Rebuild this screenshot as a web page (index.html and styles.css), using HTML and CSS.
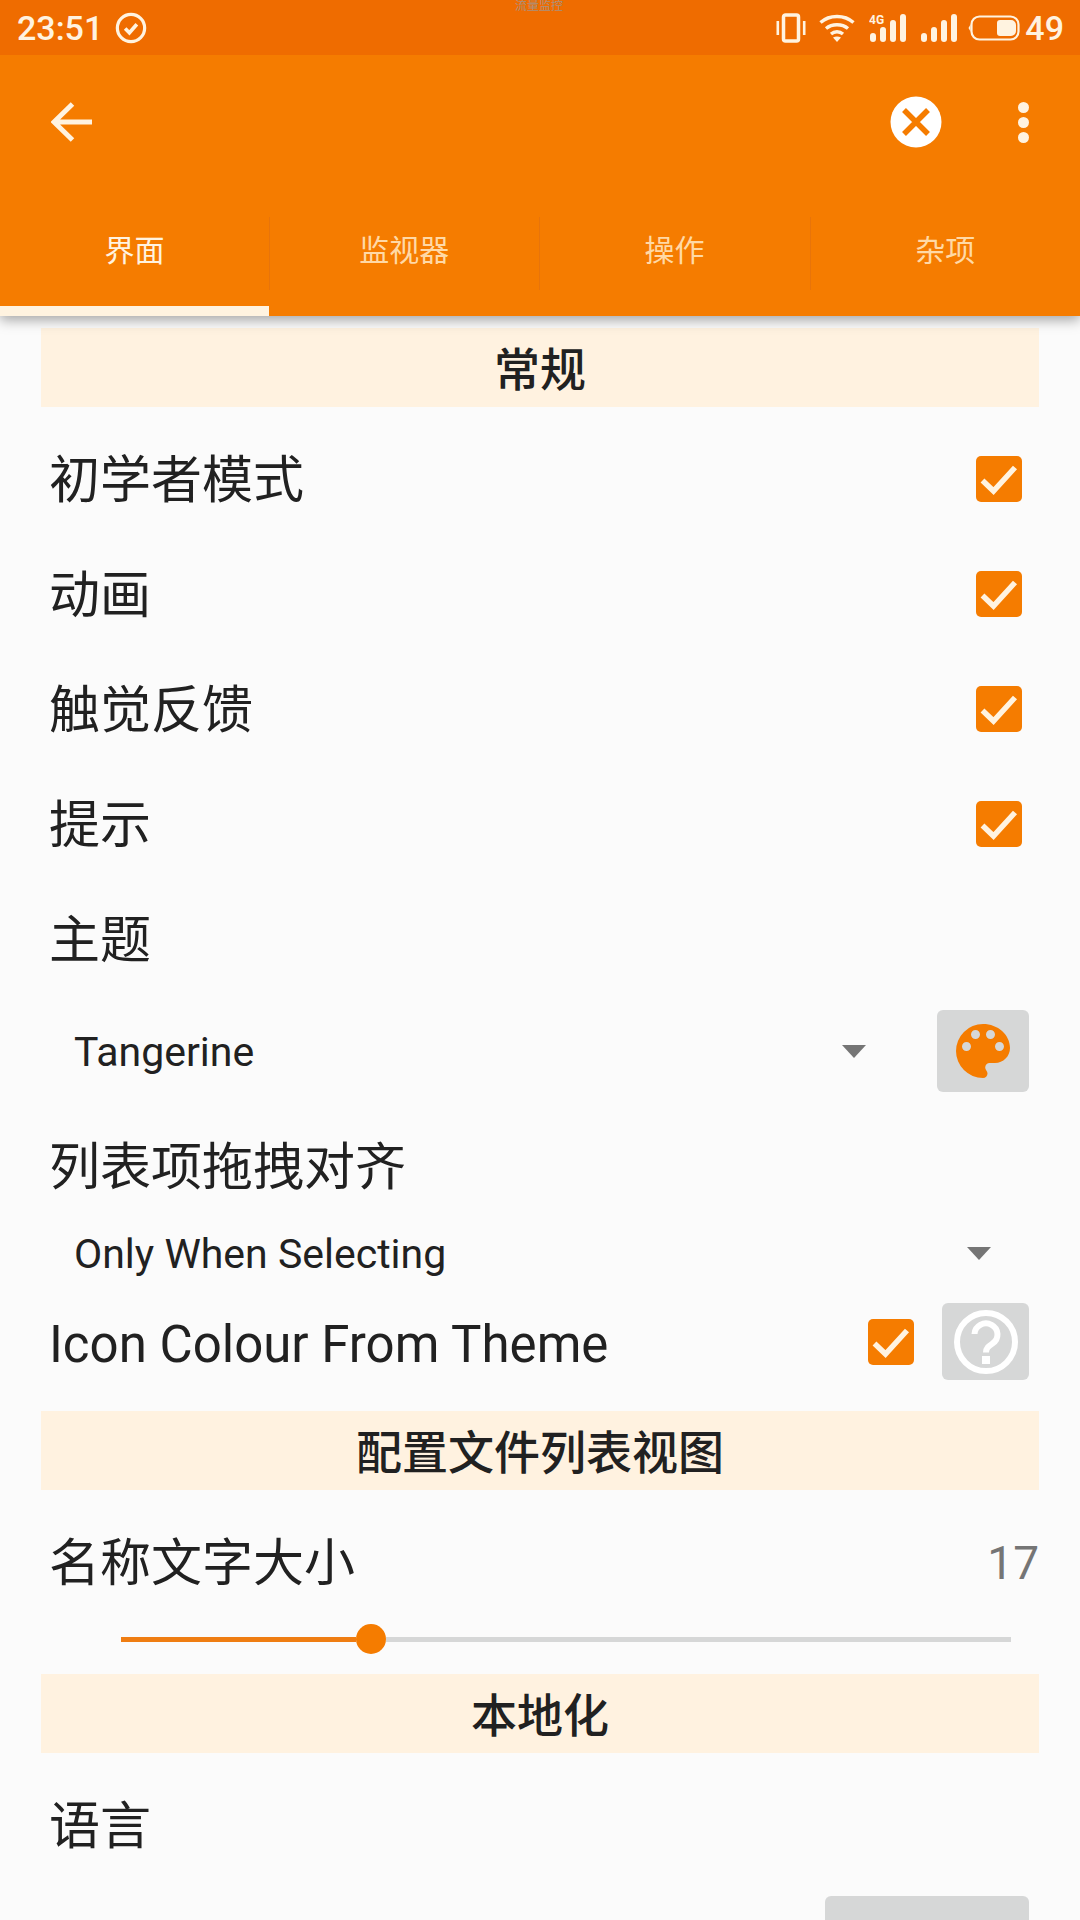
FILE: index.html
```html
<!DOCTYPE html>
<html lang="en">
<head>
    <meta charset="UTF-8">
    <meta name="viewport" content="width=device-width, initial-scale=1.0">
    <title>Settings</title>
    <link rel="stylesheet" href="styles.css">
</head>
<body>
    <header class="appbar">
        <div class="statusbar">
            <span class="clock">23:51</span>
            <svg class="sync-icon" width="32" height="32" viewBox="0 0 30 30">
                <circle cx="15" cy="15" r="12.8" fill="none" stroke="#fff3e0" stroke-width="3"/>
                <path d="M9.500 15.500l4 4 7-8" fill="none" stroke="#fff3e0" stroke-width="3.400"/>
            </svg>
            <span class="carrier-note">流量监控</span>
            <div class="status-right">
                <svg width="30" height="30" viewBox="0 0 30 30">
                    <rect x="7.500" y="2" width="15" height="26" rx="2" fill="none" stroke="#fff3e0" stroke-width="3.500"/>
                    <rect x="0.500" y="8" width="2.600" height="14" fill="#fff3e0"/>
                    <rect x="26.900" y="8" width="2.600" height="14" fill="#fff3e0"/>
                </svg>
                <svg class="wifi" width="36" height="30" viewBox="0 0 36 30">
                    <path d="M1.500 9.500C10.500 1.500 25.500 1.500 34.500 9.500M7 15.500C13 10.500 23 10.500 29 15.500M12 21C15.500 18 20.500 18 24 21" fill="none" stroke="#fff3e0" stroke-width="3.400"/>
                    <path d="M14 24.500C16.500 23 19.500 23 22 24.500L18 29z" fill="#fff3e0"/>
                </svg>
                <svg class="net" width="39" height="30" viewBox="0 0 39 30">
                    <rect x="1" y="20" width="6" height="9" rx="3" fill="#fff3e0"/>
                    <rect x="11" y="14" width="6" height="15" rx="3" fill="#fff3e0"/>
                    <rect x="21" y="7" width="6" height="22" rx="3" fill="#fff3e0"/>
                    <rect x="31" y="1" width="6" height="28" rx="3" fill="#fff3e0"/>
                    <text x="0" y="11" class="net-label">4G</text>
                </svg>
                <svg class="net net-second" width="39" height="30" viewBox="0 0 39 30">
                    <rect x="1" y="20" width="6" height="9" rx="3" fill="#fff3e0"/>
                    <rect x="11" y="14" width="6" height="15" rx="3" fill="#fff3e0"/>
                    <rect x="21" y="7" width="6" height="22" rx="3" fill="#fff3e0"/>
                    <rect x="31" y="1" width="6" height="28" rx="3" fill="#fff3e0"/>
                </svg>
                <svg class="battery" width="52" height="30" viewBox="0 0 52 30">
                    <rect x="3.500" y="3.500" width="47" height="23" rx="8" fill="none" stroke="#fff3e0" stroke-width="2.200"/>
                    <path d="M2.500 11.500L0.500 15L2.500 18.500z" fill="#fff3e0"/>
                    <path d="M32 7h11a5 5 0 0 1 5 5v6a5 5 0 0 1-5 5H32a3 3 0 0 1-3-3v-10a3 3 0 0 1 3-3z" fill="#fff3e0"/>
                </svg>
                <span class="battery-level">49</span>
            </div>
        </div>
        <div class="toolbar">
            <svg class="back-icon" width="42" height="42" viewBox="0 0 42 42">
                <path d="M3 21h38M21.500 3L3 21l18.500 18" fill="none" stroke="#fff3e0" stroke-width="5"/>
            </svg>
            <svg class="close-icon" width="52" height="52" viewBox="0 0 52 52">
                <circle cx="26" cy="26" r="25.500" fill="#fff"/>
                <path d="M14 14l24 24M38 14L14 38" stroke="#f57c00" stroke-width="5.500"/>
            </svg>
            <div class="more-icon"><i></i><i></i><i></i></div>
        </div>
        <nav class="tabs">
            <div class="tab tab-active"><span>界面</span></div>
            <div class="tab"><span>监视器</span></div>
            <div class="tab"><span>操作</span></div>
            <div class="tab"><span>杂项</span></div>
        </nav>
    </header>

    <main class="content">
        <h2 class="section-head">常规</h2>

        <div class="row first-row">
            <span class="label">初学者模式</span>
            <svg class="checkbox" width="46" height="46" viewBox="0 0 46 46"><use href="#check"/></svg>
        </div>
        <div class="row">
            <span class="label">动画</span>
            <svg class="checkbox" width="46" height="46" viewBox="0 0 46 46"><use href="#check"/></svg>
        </div>
        <div class="row">
            <span class="label">触觉反馈</span>
            <svg class="checkbox" width="46" height="46" viewBox="0 0 46 46"><use href="#check"/></svg>
        </div>
        <div class="row">
            <span class="label">提示</span>
            <svg class="checkbox" width="46" height="46" viewBox="0 0 46 46"><use href="#check"/></svg>
        </div>
        <div class="row">
            <span class="label">主题</span>
        </div>

        <div class="theme-row">
            <span class="spinner-text">Tangerine</span>
            <i class="arrow theme-arrow"></i>
            <div class="icon-btn palette-btn">
                <svg width="72" height="72" viewBox="0 0 24 24">
                    <path fill="#f57c00" d="M12 3a9 9 0 0 0 0 18c.83 0 1.500-.67 1.500-1.500 0-.39-.15-.74-.39-1.010-.23-.26-.38-.61-.38-.99 0-.83.67-1.500 1.500-1.500H16c2.760 0 5-2.240 5-5 0-4.420-4.030-8-9-8zm-5.500 9c-.83 0-1.500-.67-1.500-1.500S5.670 9 6.500 9 8 9.670 8 10.500 7.330 12 6.500 12zm3-4C8.670 8 8 7.330 8 6.500S8.670 5 9.500 5s1.500.67 1.500 1.500S10.330 8 9.500 8zm5 0c-.83 0-1.500-.67-1.500-1.500S13.670 5 14.500 5s1.500.67 1.500 1.500S15.330 8 14.500 8zm3 4c-.83 0-1.500-.67-1.500-1.500S16.670 9 17.500 9s1.500.67 1.500 1.500-.67 1.500-1.500 1.500z"/>
                </svg>
            </div>
        </div>

        <div class="drag-label">
            <span class="label">列表项拖拽对齐</span>
        </div>
        <div class="drag-spinner">
            <span class="spinner-text">Only When Selecting</span>
            <i class="arrow"></i>
        </div>

        <div class="icon-colour-row">
            <span class="label label-latin">Icon Colour From Theme</span>
            <svg class="checkbox colour-check" width="46" height="46" viewBox="0 0 46 46"><use href="#check"/></svg>
            <div class="icon-btn help-btn">
                <svg width="70" height="70" viewBox="0 0 70 70">
                    <circle cx="35" cy="35" r="29" fill="none" stroke="#fff" stroke-width="6"/>
                    <path d="M23.500 27a11.500 11 0 1 1 18 9.500c-4 2.800-6.500 4.500-6.500 9" fill="none" stroke="#fff" stroke-width="6"/>
                    <rect x="31" y="49" width="8" height="8" fill="#fff"/>
                </svg>
            </div>
        </div>

        <h2 class="section-head profile-head">配置文件列表视图</h2>

        <div class="row first-row">
            <span class="label">名称文字大小</span>
            <span class="value">17</span>
        </div>
        <div class="slider">
            <div class="slider-fill"></div>
            <div class="slider-thumb"></div>
            <div class="slider-rest"></div>
        </div>

        <h2 class="section-head locale-head">本地化</h2>

        <div class="row language-row">
            <span class="label language-label">语言</span>
        </div>
        <div class="language-btn"></div>
    </main>

    <svg class="defs" width="0" height="0">
        <symbol id="check" viewBox="0 0 46 46">
            <rect width="46" height="46" rx="5" fill="#f57c00"/>
            <path d="M6.500 24.500l11 10.500L39 11.500" fill="none" stroke="#fff3e0" stroke-width="5.500"/>
        </symbol>
    </svg>
</body>
</html>
```

FILE: styles.css
```css
html, body {
    margin: 0;
    padding: 0;
}

body {
    background: #fbfbfb;
    color: #212121;
    font-family: Roboto, "Noto Sans CJK SC", sans-serif;
    height: 1920px;
    overflow: hidden;
}

svg {
    display: block;
    flex: none;
}

.defs {
    position: absolute;
}

/* app bar */
.appbar {
    background: #f57c00;
    box-shadow: 0 4px 12px rgba(0, 0, 0, 0.35);
    position: relative;
}

.statusbar {
    align-items: center;
    background: #ef6c00;
    color: #fff3e0;
    display: flex;
    height: 55px;
    padding: 0 16px 0 17px;
    position: relative;
}

.clock {
    font-size: 34px;
    font-weight: 500;
}

.sync-icon {
    margin-left: 12px;
}

.carrier-note {
    color: #9a9a9a;
    font-size: 12px;
    left: 515px;
    line-height: 12px;
    opacity: 0.8;
    position: absolute;
    top: 0;
}

.status-right {
    align-items: center;
    display: flex;
    margin-left: auto;
}

.status-right .wifi {
    margin-left: 13px;
}

.status-right .net {
    margin-left: 14px;
}

.status-right .net-second {
    margin-left: 12px;
}

.status-right .battery {
    margin-left: 9px;
}

.net-label {
    fill: #fff3e0;
    font-family: Roboto, sans-serif;
    font-size: 12px;
    font-weight: 700;
}

.battery-level {
    font-size: 34px;
    font-weight: 500;
    margin-left: 5px;
}

.toolbar {
    align-items: center;
    display: flex;
    height: 134px;
    padding-left: 51px;
}

.close-icon {
    margin-left: auto;
}

.more-icon {
    display: flex;
    flex-direction: column;
    gap: 4px;
    margin: 0 51px 0 76px;
}

.more-icon i {
    background: #fff3e0;
    border-radius: 50%;
    height: 11px;
    width: 11px;
}

.tabs {
    display: flex;
    height: 127px;
}

.tab {
    color: #ffd9a6;
    flex: 1;
    font-size: 30px;
    padding-top: 28px;
    text-align: center;
}

.tab span {
    border-right: 1px solid #e8740a;
    display: block;
    height: 73px;
    line-height: 68px;
    margin-right: -1px;
}

.tab:last-child span {
    border-right: 0;
}

.tab-active {
    box-shadow: inset 0 -10px 0 #fff3e0;
    color: #fff3e0;
    flex: none;
    width: 269px;
}

/* settings list */
.content {
    padding: 12px 41px 0;
}

.section-head {
    background: #fff2e0;
    font-size: 46px;
    font-weight: 500;
    height: 79px;
    line-height: 85px;
    margin: 0;
    text-align: center;
}

.row {
    align-items: center;
    display: flex;
    height: 115px;
}

.first-row {
    margin-top: 15px;
}

.label {
    font-size: 51px;
    margin-bottom: 8px;
    padding-left: 8px;
}

.label-latin {
    margin-bottom: 0;
    margin-top: 5px;
}

.language-label {
    margin-bottom: 11px;
}

.checkbox {
    margin-bottom: 2px;
    margin-left: auto;
    margin-right: 17px;
}

.spinner-text {
    font-size: 41px;
    margin-top: 2px;
    padding-left: 33px;
}

.arrow {
    border-left: 12.5px solid transparent;
    border-right: 12.5px solid transparent;
    border-top: 13px solid #757575;
    height: 0;
    width: 0;
}

.icon-btn {
    align-items: center;
    background: #d6d7d7;
    border-radius: 6px;
    display: flex;
    justify-content: center;
}

.theme-row {
    align-items: center;
    display: flex;
    height: 82px;
    margin-top: 13px;
    padding-right: 10px;
}

.theme-arrow {
    margin-left: auto;
}

.palette-btn {
    height: 82px;
    margin-left: 71px;
    width: 92px;
}

.drag-label {
    align-items: center;
    display: flex;
    height: 96px;
    margin-top: 27px;
}

.drag-spinner {
    align-items: center;
    display: flex;
    height: 76px;
    justify-content: space-between;
    padding-right: 48px;
}

.icon-colour-row {
    align-items: center;
    display: flex;
    height: 77px;
    margin-top: 12px;
    padding-right: 10px;
}

.colour-check {
    margin-bottom: 0;
    margin-right: 28px;
}

.help-btn {
    height: 77px;
    width: 87px;
}

.profile-head {
    margin-top: 31px;
}

.value {
    color: #757575;
    font-size: 46px;
    margin-left: auto;
}

.slider {
    align-items: center;
    display: flex;
    height: 38px;
    padding: 0 28px 0 80px;
}

.slider-fill {
    background: #ef7d12;
    height: 5px;
    width: 235px;
}

.slider-rest {
    background: #d6d7d7;
    flex: 1;
    height: 5px;
}

.slider-thumb {
    background: #f57c00;
    border-radius: 50%;
    flex: none;
    height: 30px;
    width: 30px;
}

.locale-head {
    margin-top: 16px;
}

.language-row {
    margin-top: 17px;
}

.language-btn {
    background: #d6d7d7;
    border-radius: 6px 6px 0 0;
    height: 60px;
    margin: 11px 10px 0 auto;
    width: 204px;
}
```
